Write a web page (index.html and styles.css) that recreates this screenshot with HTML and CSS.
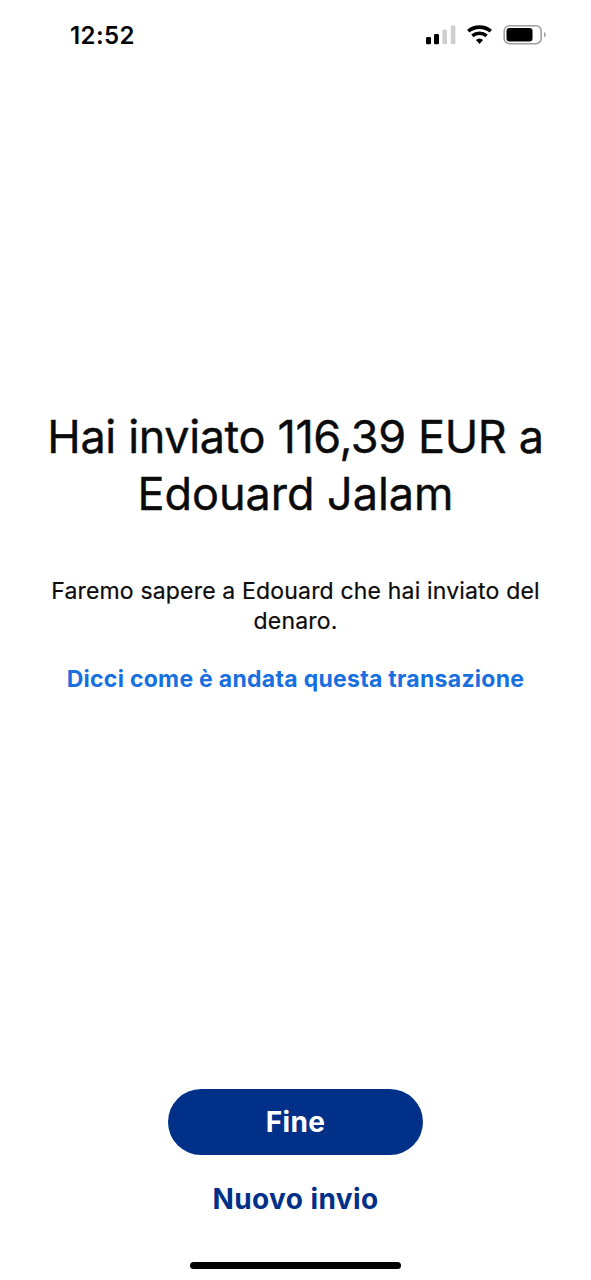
FILE: index.html
```html
<!DOCTYPE html>
<html lang="it">
<head>
<meta charset="utf-8">
<title>Denaro inviato</title>
<link rel="stylesheet" href="styles.css">
</head>
<body>
<div class="screen">
  <header class="status">
    <span class="time">12:52</span>
    <svg class="indicators" width="122" height="24" viewBox="0 0 122 24">
      <rect x="1" y="14" width="5" height="7.300" rx="1.4"/>
      <rect x="9" y="11" width="5" height="10.300" rx="1.4"/>
      <rect class="off" x="17.400" y="6.500" width="4.600" height="14.800" rx="1.4"/>
      <rect class="off" x="25.800" y="2.500" width="4.600" height="18.800" rx="1.4"/>
      <g class="wifi">
        <path d="M43.200 8.200A17.800 17.800 0 0 1 65.800 8.200"/>
        <path d="M47.400 12.800A11 11 0 0 1 61.600 12.800"/>
      </g>
      <path d="M50.900 17.100A5.600 5.600 0 0 1 58.100 17.100L54.500 21.100Z"/>
      <rect class="shell" x="79.200" y="2.700" width="37" height="18" rx="5.300"/>
      <rect x="81.500" y="5" width="26" height="13.600" rx="3"/>
      <path class="cap" d="M119 9C121.300 9.800 121.300 13.400 119 14.200Z"/>
    </svg>
  </header>
  <main class="message">
    <h1 class="title"><span class="title-amount">Hai inviato 116,39 EUR a</span><br><span class="title-name">Edouard Jalam</span></h1>
    <p class="note">Faremo sapere a Edouard che hai inviato del<br>denaro.</p>
    <a class="feedback">Dicci come è andata questa transazione</a>
  </main>
  <footer class="actions">
    <button class="primary">Fine</button>
    <button class="secondary">Nuovo invio</button>
    <div class="home-bar"></div>
  </footer>
</div>
</body>
</html>
```
FILE: styles.css
```css
body {
  margin: 0;
  background: #fff;
  color: #0b0b0b;
  font-family: Inter, "Liberation Sans", sans-serif;
}

.screen {
  box-sizing: border-box;
  display: flex;
  flex-direction: column;
  height: 1280px;
  padding-bottom: 11px;
}

.status {
  display: flex;
  justify-content: space-between;
  align-items: center;
  height: 24px;
  padding: 23px 44px 0 70px;
}

.time {
  padding-top: 2px;
  font-size: 24px;
  font-weight: 600;
  line-height: 26px;
  letter-spacing: 0.4px;
  color: #000;
}

.indicators {
  display: block;
}

.off {
  fill: #cfcfcf;
}

.wifi {
  fill: none;
  stroke: #000;
  stroke-width: 3.6;
}

.shell {
  fill: none;
  stroke: #a0a0a0;
  stroke-width: 1.6;
}

.cap {
  fill: #a0a0a0;
}

.message {
  display: flex;
  flex-direction: column;
  align-items: center;
  padding-top: 361px;
  text-align: center;
  white-space: nowrap;
}

.title {
  margin: 0;
  font-size: 45px;
  font-weight: 400;
  line-height: 57px;
  -webkit-text-stroke: 0.4px currentColor;
}

.title-amount {
  letter-spacing: -0.36px;
}

.title-name {
  letter-spacing: -0.05px;
}

.note {
  margin: 54px 0 28px;
  font-size: 23px;
  line-height: 30px;
  letter-spacing: 0.17px;
  -webkit-text-stroke: 0.2px currentColor;
}

.feedback {
  font-size: 23px;
  font-weight: 700;
  line-height: 30px;
  letter-spacing: 0.28px;
  color: #176fe0;
}

.actions {
  display: flex;
  flex-direction: column;
  align-items: center;
  margin-top: auto;
}

.primary,
.secondary {
  padding: 0;
  border: 0;
  background: none;
  font: 700 28px/36px Inter, "Liberation Sans", sans-serif;
  letter-spacing: 0.4px;
}

.primary {
  width: 255px;
  height: 66px;
  border-radius: 33px;
  background: #003087;
  color: #fff;
}

.secondary {
  height: 36px;
  margin: 26px 0 45px;
  color: #003087;
}

.home-bar {
  width: 211px;
  height: 7px;
  border-radius: 4px;
  background: #000;
}
```
